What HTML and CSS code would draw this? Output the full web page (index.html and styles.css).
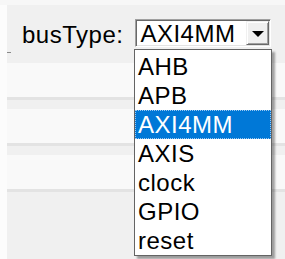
FILE: index.html
```html
<!DOCTYPE html>
<html>
<head>
    <title>busType</title>
    <link rel="stylesheet" href="styles.css">
</head>
<body>
    <div class="top-strip"></div>
    <div class="main">
        <div class="gutter"></div>
        <div class="content">
            <div class="header">
                <span class="tick"></span>
                <span class="label">busType:</span>
                <div class="combo">
                    <span class="combo-value">AXI4MM</span>
                    <span class="combo-button"><span class="arrow"></span></span>
                </div>
            </div>
            <div class="row"></div>
            <div class="row"></div>
            <div class="row"></div>
        </div>
    </div>

    <ul class="dropdown">
        <li>AHB</li>
        <li>APB</li>
        <li class="selected">AXI4MM</li>
        <li>AXIS</li>
        <li>clock</li>
        <li>GPIO</li>
        <li>reset</li>
    </ul>
</body>
</html>
```

FILE: styles.css
```css
body {
    margin: 0;
    padding: 0;
    width: 285px;
    height: 259px;
    overflow: hidden;
    background-color: #f0f0f0;
    font-family: "Liberation Sans", Arial, sans-serif;
    color: #000;
    position: relative;
}

.top-strip {
    height: 5px;
    background-color: #f7f7f7;
}

.main {
    display: flex;
    height: 254px;
}

.gutter {
    width: 7px;
    background-color: #fcfcfc;
}

.content {
    flex: 1;
}

.header {
    position: relative;
    height: 58px;
    display: flex;
    align-items: flex-start;
    padding-left: 15px;
    box-sizing: border-box;
    padding-top: 14px;
}

.tick {
    position: absolute;
    left: 0;
    top: 47px;
    width: 4px;
    height: 1px;
    background-color: #8a8a8a;
}

.label {
    font-size: 24px;
    line-height: 24px;
    letter-spacing: 0.5px;
    padding-top: 4px;
}

.combo {
    display: flex;
    width: 136px;
    height: 28px;
    box-sizing: border-box;
    margin-left: 12px;
    background-color: #fff;
    border-top: 1px solid #a0a0a0;
    border-left: 1px solid #a0a0a0;
    border-bottom: 1px solid #fff;
    border-right: 1px solid #fff;
    box-shadow: inset 1px 1px 0 #696969, inset -1px -1px 0 #e3e3e3;
}

.combo-value {
    flex: 1;
    font-size: 24px;
    line-height: 24px;
    letter-spacing: 0.5px;
    padding: 2px 0 0 4px;
}

.combo-button {
    display: flex;
    align-items: center;
    justify-content: center;
    width: 23px;
    height: 24px;
    margin: 1px 1px 0 0;
    box-sizing: border-box;
    background-color: #f0f0f0;
    border-top: 1px solid #f0f0f0;
    border-left: 1px solid #f0f0f0;
    border-bottom: 1px solid #696969;
    border-right: 1px solid #696969;
    box-shadow: inset 1px 1px 0 #fff, inset -1px -1px 0 #a0a0a0;
}

.arrow {
    width: 0;
    height: 0;
    border-left: 6px solid transparent;
    border-right: 6px solid transparent;
    border-top: 6px solid #000;
    margin-top: 1px;
}

.row {
    height: 34px;
    background-color: #f9f9f9;
    border-bottom: 3px solid #e3e3e3;
    margin-bottom: 9px;
}

.dropdown {
    position: absolute;
    left: 134px;
    top: 49px;
    width: 136px;
    margin: 0;
    padding: 2px 0 0 0;
    list-style: none;
    background-color: #fff;
    border: 1px solid #646464;
    box-shadow: 3px 3px 2px rgba(0, 0, 0, 0.35);
}

.dropdown li {
    font-size: 24px;
    line-height: 29px;
    height: 29px;
    letter-spacing: 0.5px;
    padding-left: 3px;
}

.dropdown li.selected {
    background-color: #0078d7;
    color: #fff;
    outline: 1px dotted #9cc8f0;
    outline-offset: -1px;
}
```
